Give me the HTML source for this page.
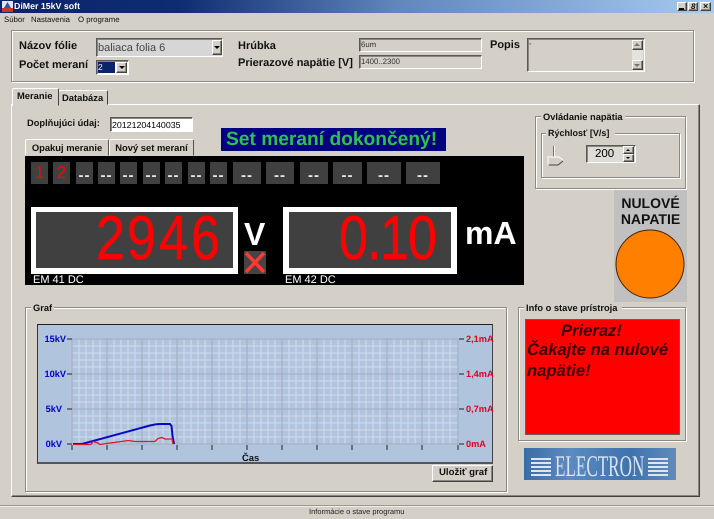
<!DOCTYPE html>
<html><head><meta charset="utf-8"><title>DiMer 15kV soft</title>
<style>
html,body{margin:0;padding:0}
body{width:714px;height:519px;overflow:hidden;position:relative;background:#d4d0c8;font-family:"Liberation Sans",sans-serif;color:#111;text-rendering:geometricPrecision}
div,span.a{position:absolute;box-sizing:border-box}
.t{position:absolute;white-space:nowrap;line-height:14px;height:14px}
.b{font-weight:bold}
.s9{font-size:7.800px}.s10{font-size:9.400px}.s12{font-size:11px}
.groove{border:1px solid #8d8a84;box-shadow:1px 1px 0 #fff,inset 1px 1px 0 #fff}
.legend{position:absolute;background:#d4d0c8;padding:0 2px;font-weight:bold;font-size:9.300px;line-height:12px;white-space:nowrap}
.sunk{border:1px solid;border-color:#5a5852 #fff #fff #5a5852;box-shadow:inset 1px 1px 0 #8a8780}
.btn{background:#d4d0c8;border:1px solid;border-color:#fff #45433f #45433f #fff;box-shadow:inset -1px -1px 0 #8a8780}
.tabbtn{background:#d4d0c8;border:1px solid;border-color:#fff #55534e #d4d0c8 #fff;border-radius:2px 2px 0 0;text-align:center;font-weight:bold;font-size:9.400px;line-height:15px;white-space:nowrap}
.sd{background:#404040;height:22px;top:162px}
.sd span{position:absolute;left:0;right:0;top:3px;text-align:center;font:bold 15px/22px "Liberation Sans",sans-serif;letter-spacing:1px;color:#e8e8e8}
.sd span.r{top:0;font:17px/22px "Liberation Sans",sans-serif;color:#f00;letter-spacing:0}
.led{position:absolute;font:62px/46px "Liberation Sans",sans-serif;color:#f00;-webkit-text-stroke:.5px #f00;height:46px;top:216px;transform-origin:0 50%;transform:scaleX(.84);white-space:nowrap}
.blue{color:#0000c8;font-weight:bold;font-size:9.200px;text-align:right;width:26px;left:40px}
.red{color:#e00028;font-weight:bold;font-size:9.200px;left:466px}
</style></head>
<body>
<!-- title bar -->
<div style="left:0;top:0;width:714px;height:13px;background:linear-gradient(90deg,#0a246a 0,#0f2c72 25%,#5f85bb 55%,#a6caf0 100%)"></div>
<svg style="position:absolute;left:2px;top:1px" width="11" height="11"><rect width="11" height="11" fill="#dfe6f2"/><path d="M5.500 1L9 7H2Z" fill="#3157a8"/><rect y="7" width="11" height="4" fill="#c83828"/></svg>
<span class="t b" style="left:14px;top:0;font-size:8.800px;color:#fff;line-height:13px">DiMer 15kV soft</span>
<div class="btn" style="left:677px;top:2px;width:10px;height:9px"></div><div style="left:679px;top:8px;width:5px;height:2px;background:#000"></div>
<div class="btn" style="left:688px;top:2px;width:10px;height:9px"></div><span class="t b" style="left:691px;top:0;line-height:13px;font-style:italic;font-size:8px">8</span>
<div class="btn" style="left:700px;top:2px;width:11px;height:9px"></div><span class="t b" style="left:703px;top:0;line-height:13px;font-size:9px">×</span>
<!-- menu -->
<span class="t s9" style="left:4px;top:13px">Súbor</span>
<span class="t s9" style="left:31px;top:13px">Nastavenia</span>
<span class="t s9" style="left:78px;top:13px">O programe</span>
<!-- top group -->
<div class="groove" style="left:11px;top:30px;width:683px;height:52px"></div>
<span class="t b s12" style="left:19px;top:39px">Názov fólie</span>
<span class="t b s12" style="left:19px;top:58px">Počet meraní</span>
<div class="sunk" style="left:96px;top:38px;width:127px;height:19px;background:#d6d6d6"></div>
<span class="t" style="left:98px;top:41px;font-size:11px;color:#444">baliaca folia 6</span>
<div class="btn" style="left:212px;top:40px;width:10px;height:15px"></div>
<svg style="position:absolute;left:214px;top:46px" width="7" height="4"><path d="M0 0H6L3 3Z" fill="#000"/></svg>
<div class="sunk" style="left:96px;top:60px;width:33px;height:15px;background:#fff"></div>
<div style="left:98px;top:62px;width:17px;height:11px;background:#0a246a"></div>
<span class="t" style="left:98px;top:60px;color:#fff;font-size:8.500px">2</span>
<div class="btn" style="left:116px;top:62px;width:11px;height:11px"></div>
<svg style="position:absolute;left:119px;top:66px" width="7" height="4"><path d="M0 0H6L3 3Z" fill="#000"/></svg>
<span class="t b s12" style="left:238px;top:39px">Hrúbka</span>
<span class="t b s12" style="left:238px;top:56px">Prierazové napätie [V]</span>
<div class="sunk" style="left:359px;top:38px;width:123px;height:14px"></div>
<span class="t s9" style="left:361px;top:38px;color:#333">6um</span>
<div class="sunk" style="left:359px;top:55px;width:123px;height:14px"></div>
<span class="t s9" style="left:361px;top:55px;color:#333">1400..2300</span>
<span class="t b s12" style="left:490px;top:38px">Popis</span>
<div class="sunk" style="left:527px;top:38px;width:118px;height:34px"></div>
<span class="t s9" style="left:529px;top:37px">-</span>
<div style="left:632px;top:40px;width:11px;height:31px;background:#e4e2dd"></div>
<div class="btn" style="left:632px;top:40px;width:11px;height:10px"></div>
<div class="btn" style="left:632px;top:60px;width:11px;height:10px"></div>
<svg style="position:absolute;left:634px;top:43px" width="7" height="24"><path d="M0 3H6L3 0ZM0 21H6L3 24Z" fill="#77736c"/></svg>
<!-- tab panel -->
<div style="left:11px;top:104px;width:689px;height:393px;border:1px solid;border-color:#fff #45433f #45433f #fff;box-shadow:inset -1px -1px 0 #8a8780"></div>
<div style="left:58px;top:90px;width:50px;height:15px;border:1px solid;border-color:#fff #45433f #d4d0c8 #fff;border-radius:2px 2px 0 0"></div>
<span class="t b s10" style="left:62px;top:91px">Databáza</span>
<div style="left:12px;top:88px;width:47px;height:18px;background:#d4d0c8;border:1px solid;border-color:#fff #45433f #d4d0c8 #fff;border-radius:2px 2px 0 0"></div>
<span class="t b s10" style="left:17px;top:89px">Meranie</span>
<!-- extra data -->
<span class="t b" style="left:27px;top:116px;font-size:9.300px">Doplňujúci údaj:</span>
<div class="sunk" style="left:110px;top:117px;width:83px;height:15px;background:#fff"></div>
<span class="t" style="left:112px;top:118px;font-size:8.800px;color:#000">20121204140035</span>
<div style="left:221px;top:128px;width:225px;height:23px;background:#000080"></div>
<span class="t b" style="left:226px;top:128px;height:23px;font-size:19.200px;line-height:23px;color:#2fc04f">Set meraní dokončený!</span>
<div class="tabbtn" style="left:25px;top:139px;width:84px;height:17px">Opakuj meranie</div>
<div class="tabbtn" style="left:109px;top:139px;width:85px;height:17px">Nový set meraní</div>
<!-- black panel -->
<div style="left:25px;top:156px;width:499px;height:129px;background:#000;overflow:hidden"></div>
<div class="sd" style="left:31px;width:17px"><span class="r">1</span></div>
<div class="sd" style="left:53px;width:17px"><span class="r">2</span></div>
<div class="sd" style="left:76px;width:17px"><span>--</span></div>
<div class="sd" style="left:98px;width:17px"><span>--</span></div>
<div class="sd" style="left:120px;width:17px"><span>--</span></div>
<div class="sd" style="left:143px;width:17px"><span>--</span></div>
<div class="sd" style="left:165px;width:17px"><span>--</span></div>
<div class="sd" style="left:188px;width:17px"><span>--</span></div>
<div class="sd" style="left:210px;width:17px"><span>--</span></div>
<div class="sd" style="left:233px;width:28px"><span>--</span></div>
<div class="sd" style="left:266px;width:28px"><span>--</span></div>
<div class="sd" style="left:300px;width:28px"><span>--</span></div>
<div class="sd" style="left:333px;width:29px"><span>--</span></div>
<div class="sd" style="left:367px;width:34px"><span>--</span></div>
<div class="sd" style="left:406px;width:34px"><span>--</span></div>
<!-- displays -->
<div style="left:31px;top:207px;width:207px;height:67px;background:#404040;border:5px solid #fff;border-width:5px 5px 6px 5px"></div>
<span class="led" style="left:96px">2</span>
<span class="led" style="left:127px">9</span>
<span class="led" style="left:159px">4</span>
<span class="led" style="left:191px">6</span>
<div style="left:283px;top:207px;width:174px;height:67px;background:#404040;border:5px solid #fff;border-width:5px 6px 6px 6px"></div>
<span class="led" style="left:339px">0</span>
<span class="led" style="left:367px">.</span>
<span class="led" style="left:380px">1</span>
<span class="led" style="left:408px">0</span>
<span class="t b" style="left:244px;top:216px;height:36px;font-size:32px;line-height:36px;color:#fff">V</span>
<span class="t b" style="left:465px;top:215px;height:36px;font-size:32px;line-height:36px;color:#fff">mA</span>
<div style="left:244px;top:251px;width:22px;height:23px;background:#444"></div>
<svg style="position:absolute;left:244px;top:251px" width="22" height="23"><path d="M2 2L20 21M20 2L2 21" stroke="#ff3a30" stroke-width="3.500" fill="none"/></svg>
<span class="t" style="left:33px;top:273px;font-size:11px;color:#fff">EM 41 DC</span>
<span class="t" style="left:285px;top:273px;font-size:11px;color:#fff">EM 42 DC</span>
<!-- voltage control -->
<div class="groove" style="left:535px;top:116px;width:151px;height:73px"></div>
<span class="legend" style="left:541px;top:111px">Ovládanie napätia</span>
<div class="groove" style="left:541px;top:133px;width:139px;height:45px"></div>
<span class="legend" style="left:546px;top:127px;padding-right:6px;font-size:9px">Rýchlosť [V/s]</span>
<div style="left:553px;top:146px;width:2px;height:12px;border-left:1px solid #77736c;border-right:1px solid #fff"></div>
<svg style="position:absolute;left:547px;top:156px" width="18" height="11"><path d="M1 8V1H12L16 4" fill="#d4d0c8" stroke="#fff"/><path d="M2 9H11L16 5" stroke="#45433f" fill="none"/></svg>
<div class="sunk" style="left:586px;top:145px;width:50px;height:18px;background:#dedcd6"></div>
<span class="t" style="left:595px;top:146px;height:16px;font-size:11.500px;line-height:16px;color:#000">200</span>
<div class="btn" style="left:623px;top:146px;width:11px;height:8px"></div>
<div class="btn" style="left:623px;top:154px;width:11px;height:8px"></div>
<svg style="position:absolute;left:626px;top:148px" width="5" height="12"><path d="M0 3H4L2 1ZM0 9H4L2 11Z" fill="#000"/></svg>
<!-- zero voltage -->
<div style="left:614px;top:190px;width:73px;height:112px;background:#c0c0c0"></div>
<span class="t b" style="left:614px;top:194px;width:73px;height:18px;text-align:center;font-size:14px;line-height:18px">NULOVÉ</span>
<span class="t b" style="left:614px;top:210px;width:73px;height:18px;text-align:center;font-size:14px;line-height:18px">NAPATIE</span>
<svg style="position:absolute;left:614px;top:229px" width="73" height="71"><circle cx="36" cy="35" r="34" fill="#ff8000" stroke="#402408"/></svg>
<!-- graph group -->
<div class="groove" style="left:25px;top:307px;width:482px;height:185px"></div>
<span class="legend" style="left:31px;top:302px">Graf</span>
<div style="left:37px;top:324px;width:456px;height:140px;background:#b0c4de;border-top:1px solid #222;border-left:1px solid #333;border-right:1px solid #444;border-bottom:2px solid #555"></div>
<svg style="position:absolute;left:60px;top:330px" width="410" height="125" viewBox="60 330 410 125">
<g stroke="#d2dcea" stroke-width="1" shape-rendering="crispEdges">
<path d="M79 339V444M86 339V444M93 339V444M100 339V444M114 339V444M121 339V444M128 339V444M135 339V444M149 339V444M156 339V444M163 339V444M170 339V444M184 339V444M191 339V444M198 339V444M205 339V444M219 339V444M226 339V444M233 339V444M240 339V444M254 339V444M261 339V444M268 339V444M275 339V444M289 339V444M296 339V444M303 339V444M310 339V444M324 339V444M331 339V444M338 339V444M345 339V444M359 339V444M366 339V444M373 339V444M380 339V444M394 339V444M401 339V444M408 339V444M415 339V444M429 339V444M436 339V444M443 339V444M450 339V444"/>
<path d="M72 346H458M72 353H458M72 360H458M72 367H458M72 381H458M72 388H458M72 395H458M72 402H458M72 416H458M72 423H458M72 430H458M72 437H458"/>
</g>
<g stroke="#a2acb9" stroke-width="1" shape-rendering="crispEdges" fill="none">
<path d="M72 339H458M72 374H458M72 409H458M72 444H458"/>
<path d="M72 339V444M107 339V444M142 339V444M177 339V444M212 339V444M247 339V444M282 339V444M317 339V444M352 339V444M387 339V444M422 339V444M458 339V444"/>
</g>
<g stroke="#222" stroke-width="1" shape-rendering="crispEdges">
<path d="M72 445V450M107 445V450M142 445V450M177 445V450M212 445V450M247 445V450M282 445V450M317 445V450M352 445V450M387 445V450M422 445V450M458 445V450"/>
<path d="M67 339H72M67 374H72M67 409H72M67 444H72M459 339H464M459 374H464M459 409H464M459 444H464"/>
</g>
<path d="M73 444H82L150 425.500Q156 424 160 424H170L171.500 426L172.500 436L174 444" stroke="#0808c8" stroke-width="2" fill="none"/>
<path d="M73 444.500H91L93 441.500L98 443L100 444.500L110 443L125 441L128 440.500L135 441.500H155L158 438.500L162 437.500L165 439H172L173 444" stroke="#e01828" stroke-width="1.300" fill="none"/>
</svg>
<span class="t blue" style="top:332px">15kV</span>
<span class="t blue" style="top:367px">10kV</span>
<span class="t blue" style="top:402px;left:36px">5kV</span>
<span class="t blue" style="top:437px;left:36px">0kV</span>
<span class="t red" style="top:332px">2,1mA</span>
<span class="t red" style="top:367px">1,4mA</span>
<span class="t red" style="top:402px">0,7mA</span>
<span class="t red" style="top:437px">0mA</span>
<span class="t b s10" style="left:242px;top:451px">Čas</span>
<div class="btn" style="left:432px;top:465px;width:61px;height:17px"></div>
<span class="t b" style="left:439px;top:466px;font-size:9.600px">Uložiť graf</span>
<!-- info group -->
<div class="groove" style="left:518px;top:307px;width:168px;height:134px"></div>
<span class="legend" style="left:524px;top:302px;padding-right:5px">Info o stave prístroja</span>
<div style="left:525px;top:319px;width:155px;height:116px;background:#f00;border:1px solid #6a5a58"></div>
<span class="t b" style="left:561px;top:321px;height:20px;font-size:16.600px;line-height:20px;font-style:italic;color:#3a0000">Prieraz!</span>
<span class="t b" style="left:527px;top:340px;height:20px;font-size:16.600px;line-height:20px;font-style:italic;color:#3a0000">Čakajte na nulové</span>
<span class="t b" style="left:527px;top:361px;height:20px;font-size:16.600px;line-height:20px;font-style:italic;color:#3a0000">napätie!</span>
<!-- logo -->
<div style="left:524px;top:448px;width:152px;height:32px;background:linear-gradient(90deg,#3c6ca6,#5b8bc0 30%,#3f73ad 70%,#5f8cbc);overflow:hidden"></div>
<svg style="position:absolute;left:524px;top:448px" width="152" height="32"><path d="M7 11H27M7 15H27M7 19H27M7 23H27M7 27H27M124 11H144M124 15H144M124 19H144M124 23H144M124 27H144" stroke="#e0e4ec" stroke-width="2" fill="none"/></svg>
<span class="t" style="left:555px;top:450px;height:32px;line-height:33px;font-family:'Liberation Serif',serif;font-size:30px;color:#dce4ee;transform:scaleX(.57);transform-origin:0 50%">ELECTRON</span>
<!-- status -->
<div style="left:0;top:505px;width:714px;height:2px;border-top:1px solid #9b9890;border-bottom:1px solid #eeece6"></div>
<span class="t" style="left:309px;top:505px;color:#222;font-size:7.500px">Informácie o stave programu</span>
</body></html>
